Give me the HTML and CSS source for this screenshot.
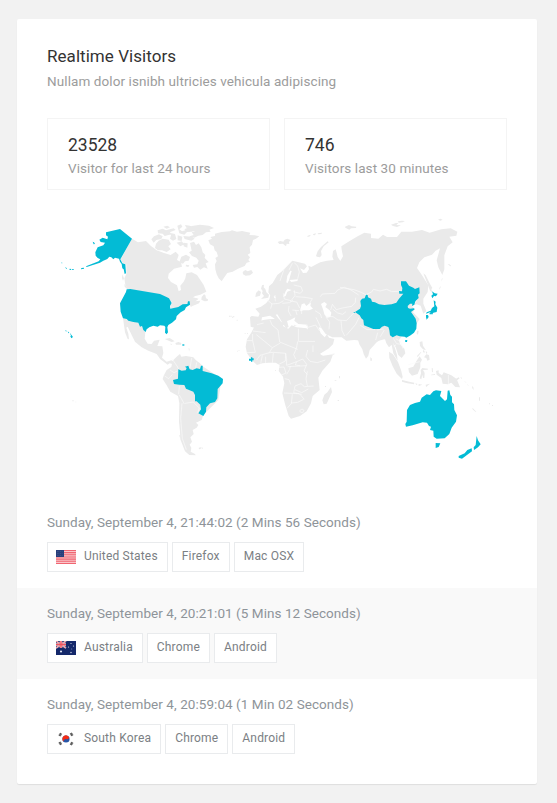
FILE: index.html
```html
<!DOCTYPE html>
<html lang="en">
<head>
<meta charset="utf-8">
<title>Realtime Visitors</title>
<link rel="stylesheet" href="styles.css">
</head>
<body>
<main class="card">
  <header class="card-header">
    <h1>Realtime Visitors</h1>
    <p>Nullam dolor isnibh ultricies vehicula adipiscing</p>
  </header>
  <section class="stats">
    <div class="stat"><strong>23528</strong><span>Visitor for last 24 hours</span></div>
    <div class="stat"><strong>746</strong><span>Visitors last 30 minutes</span></div>
  </section>
  <svg class="map" viewBox="-9 0 1380 780" aria-label="World map">
    <!-- North America -->
    <g class="land">
      <path d="M246 86l18 11 24-4 14 14 18 14 22 8 20 6 15-10 9 10-5 15 12 7 3 13-24 6-16 15-2 13 9 12 18 10 5 18 7-4-2-13 10-12 5-10 3-15 16-3 16 8 10 15 10 15 8 20-18 9-15 4-7 4 17 4-15 10-5 14-7-5 0-11-13 11-20 7-23 4-2-11 6-7-11-12-20-9-30-7-70-12-10-13-3-20 6-13 0-29-11-3-6-12z"/>
      <path d="M219 325l46 13 11 12 10 16-2 20 9 15 12 1 7-10 17-3-7 19 15 1 3 20-4 14 14 12 14-4 12 8-7 4-10-3-6 4-22-16-11-16-25-10-20-10-20-17-10-20-12-25-4 3 6 18 2 17-4-1-8-20z"/>
      <path d="M217 193l5 12-3 7-3-8zM223 222l14 14-5 2-8-8z"/>
      <path d="M304 88l8-9 15-6 11 6-4 8-15 3-8 8zM318 101l8-9 12-6 18 3 7 13-8 7 7 9-12 8-14-5-12 0-9-7zM323 61l15-5 10 5 23-6 6 5-18 7 8 5-23 6-6-7-14-1zM340 50l12-3 8 5-10 4zM365 70l10 2 4 15-10 5-9-6zM383 76l14 4-2 13-12-2zM382 47l11-4 4 7-9 8 8 6 15-5 3-8 20 2 6 7-15 5-14 1-8 8-15-4zM405 45l15 2 5 5-16 1zM425 48l25-4 27 3 15 7-14 5 4 6-14 2-10 8-13 2-12 6-15-4 13-4-6-8 10-3-16-4-7 5-9-7zM400 78l25 2 9 6-10 6-20-5zM380 98l15-4 8 9-12 6zM420 99l12-4 6 10 8-5 8 12 4 15 8 8-2 9 12 12-9 4 6 16-11-4-11 7-9-8-10 2-4-8 14-2 4-11-7-9-13-5-9-11 8-5zM401 98l12 2-1 13-11-4zM394 140l14-6 12 7-4 11-11 2-6 7-11-4zM408 164l10 2-3 5-8-2z"/>
      <path d="M423 266l12-2 9 4-8 6 15-2-4 8-12 5-14 5zM455 261l7-8 4 2 2 10 6 3-1 5-9 1-10-5z"/>
      <path d="M475 91l11-5-5-5 14-3 0-7 20-5 25-2 6-3 15 4 15-2 25 5-3 7 16 1 14 3-10 7-9 4-3 14-7 8 2 17-8 5 7 8-5 8 5 5-10 3-6 10-20 8-16 9-16 4-8 11-9 14-9-9-6-12-4-15-1-15 5-10-4-9 8-5-4-13-6-5-3-12-11-6z"/>
      <path d="M578 186l8-6 7 4 11-4 5 8-9 8-13 1-8-4zM344 387l15-3 15 10-9 2zM376 399l9-3 9 3-1 5-15 0zM360 401l6 1-2 3zM368 370l3 2M372 377l3 3M416 413l3 4-2 8M418 433l2 6"/>
    </g>
    <g class="visited">
      <path d="M168 67L210 57L246 86L211 148L217 160L226 163L228 190L224 192L221 178L217 175L215 162L210 155L207 146L195 143L190 148L184 142L178 140L172 147L160 152L150 158L110 171L108 169L146 154L151 148L143 144L137 137L136 127L143 112L160 106L165 98L152 96L148 89L158 83L172 88L174 80L168 76zM128 95l4 2 3 5-4 1z"/>
      <path d="M94 174l8-1 0 3-9 2zM45 171l6 4-2 2zM59 176l5 1-1 3-5-1zM66 177l5 0 0 3-5-1zM34 157l3 1-1 3zM46 359l4 4-2 2zM53 364l5 4-3 2zM60 370l4 3-2 2zM64 374l5 7-5 4-3-6z"/>
      <path d="M230 238L241 237L330 252L348 260L357 265L365 279L360 288L361 296L385 291L398 283L412 282L414 274L419 274L420 284L408 292L404 300L392 307L380 318L378 328L366 338L355 345L352 352L354 367L350 373L345 368L346 351L343 347L330 346L323 350L310 347L298 352L290 358L287 366L280 360L276 348L270 350L265 338L250 336L235 332L230 327L219 325L212 305L210 280L228 246z"/>
      <path d="M397 403h6v4h-6z"/>
    </g>
    <!-- South America -->
    <g transform="translate(300 390)">
      <path class="land" d="M80 50L90 42L94 50L108 48L130 52L137 60L150 70L158 79L185 97L215 115L205 180L160 225L155 240L138 248L145 255L140 263L128 270L131 282L121 292L126 305L119 314L124 323L122 335L135 342L137 346L118 345L105 334L98 316L91 298L90 275L87 245L88 190L84 168L61 155L50 136L38 117L41 107L50 90L64 81L68 62z"/>
      <path class="visited" d="M85 88L95 92L107 91L110 84L105 80L115 77L119 88L128 90L140 85L150 87L153 77L158 77L158 93L185 100L205 107L219 117L218 130L203 147L202 175L195 186L180 190L169 202L168 215L160 228L145 220L153 208L151 194L140 184L135 184L135 165L130 155L108 146L103 135L88 134L72 132L69 120L84 116z"/>
      <path class="border" d="M65 55l16 23 5 9M60 90l12 8 10-5M44 108l12 8 11-12M88 138l-2 25M88 165l15 27M96 190l-4 45 5 60 12 34M105 190l25-4 18 18-5 15M125 54l-5 30M140 67l-3 17"/>
      <path class="land" d="M146 323l7-1-1 5-5 1zM154 322l6 2-4 3zM88 285l3 1 1 8-3-2z"/>
    </g>
    <!-- Eurasia -->
    <g transform="translate(555 0)">
      <path class="land" d="M172 152l13 3 25 6 6 8-9 11-12-5 9 14 11-1 7-10-2-11 9 4 15-8 12-6 20-5 20-2-4-10 2-17 8-5 3 10 3 13 8 12 8-14-4-20-1-10 25-16 24-14 20-11 20 3 0 13 22 2 14-12 12 7 30 0 13-16 32 0 30-5 23 8 35-10 28-3 20 10-3 12-21 3 10 17-15 12-10 27 0 42-6 17-12-23-5-21 10-36-13 7-11 12-23 8-15 15-7 17 14 20 20 32-2 20-13 20 0 15 9 22-9 8-8-24-12-4-15 4 9 10-5 10 20 20-28 42-18 9-60 10-30 8-60-6-24 2-14-10-28 0-20-10-13-18-8-2 6 18 12 12 7-9 6 10 16 4-4 16-12 12-29 18-10 2-8-12-17-30-8-23 8-14 0-12-28-2-12-10 3-10-14 7-11 4 5 18-8 4-14-22-12-20-5 1 15 20 11 9-11 12-5-12-15-18-12-8-24 5-2 12-8 13-10 7-14-4-2-28 5-4 20 2 4-9-13-15 17-6 15-10 10-12 3-13 8-3 4 12 16 0 18-6 5-13 13-5-13-4-5 8-5 12-10 14-10 4-7-15-13 0-7-12 2-18 11-10 14-24 14-11z"/>
      <path class="land" d="M320 350L345 358L369 390L373 403L382 418L386 432L393 446L400 437L404 420L425 397L440 386L450 388L454 400L462 412L470 404L475 430L488 452L486 435L480 415L474 398L482 412L490 435L500 444L511 430L508 416L495 402L492 390L500 380L470 360L440 345L400 335L360 320z"/>
      <path class="sea" d="M196 298l4-15 8-3 6 8 8-7 6-3-2 9 8 9-12 5-16 0-10 3zM258 282l10-6 8 6-5 9 12 9 6 8-3 13-10 2-8-10-4-15zM166 182l4 1-5 17-3 11-5 9-3-3 3-20zM163 210l26-2-2 5-18 3z"/>
      <path class="land" d="M81 226l6-2-1 8 5 5 3 10 8 7-2 9-22 4 9-9-6-8 2-7-5-7zM63 249l8-8 7 5-3 11-14 4zM122 239l5 0-1 5zM109 306l3-2 1 10-4-1zM137 324l10 2-2 3-8-2zM176 344l10 2-9 1zM213 346l7-3-3 4zM406 441l5 5-1 7-4-1z"/>
      <path class="land" d="M128 96l8-3 9 2 4-6 8-3 10 4-5 6 1 6-8-1-2 8-9-8-11 1zM218 77l9-3-2 5-8 2zM235 72l8-2-3 6-6-1zM248 70l13-2-2 4-10 1zM243 138l5-14 10-13 20-17 3 3-15 12-8 14 2 12-5 7-9-2zM330 50l12-5 8 4 14 1-1 4-15 1-5 4-12-6zM468 44l15-5 7 0-6 6 14 1-12 5-12-3zM489 34l12-2 9 1-7 4-12 1zM609 29l7-3 7 3-7 3zM638 162l5 1 6 5-3 1z"/>
      <path class="land" d="M565 190l7 6 12 24 8 14-3 3 3 11-7-6-7-19zM546 362l5 0-2 12-4-3zM613 235l3-6 1 1-3 9zM620 207l3-4-3 12z"/>
      <path class="border" d="M172 160l-10 20M135 213l5-15 7-20 15-18M178 158l10 10 5 18-5 20M176 225l22 5 5 13-8 7-20-5M145 250l3 17 20 5 12-15-2-16M120 255l1 19M95 268l16 14-4 14M109 282l23-2 14-8M142 280l22-2 10-8M165 273l20 3 9 18M172 300l20 2M182 260l28 2 22 4-9 15M256 260l6-8 38-2 8-10 20-8 20 8 23 15M362 263l-1 14-11 12-28 5-18 5-12-16-5 17M276 320l18 0 15 10 25 2 14-15 10-9M315 232l42 7 22 8 15 8M392 254l18-8 5-8 20 5 20-5 15 7 33-2 10 8M240 302l16 10 4 12M243 322l15 32M219 352l23-7 12 18M272 320l12 16-2 22M318 332l3 30 8 16M334 376l28-33 10-20M376 346l20 13 24 0M426 360l20-3M448 360l-12 20M428 368l-6 22M162 288l-2 15 8 15M182 300l4 15M293 297l15 12 15 4 10-8M200 297l0 15M535 285l8-10 5-12M475 385l10 16 12 2M482 386l14 8 8 22M475 408l8-3"/>
    </g>
    <!-- Africa -->
    <g transform="translate(555 300)">
      <path class="land" d="M65 36L85 30L100 28L128 26L134 29L132 42L148 50L160 56L170 46L185 52L215 55L224 72L234 95L243 118L258 134L264 137L294 133L286 155L262 182L250 203L254 240L233 258L228 280L215 304L195 318L168 326L161 318L150 282L142 250L148 220L144 200L131 183L134 165L122 158L100 158L82 160L66 165L52 152L36 130L32 110L36 88L50 66z"/>
      <path class="border" d="M66 44l20-5M54 63l38 5M35 92l18 0 0-20M64 74l48 39 24-14M105 30l6 15 18 15 5 36 54 22M190 56l0 38M188 94l-4 22-8 18 6 13M190 94l50 0M112 113l-9 15-28 8-10 14M53 92l8 35-28 1M103 128l12-1 37 3-1 23-18 9M92 140l0 20M82 136l-5 25M115 128l-3 31M152 130l3 18 0 18 30-11M185 155l-4 10 14 2M185 155l18-8 12 16-8 20 10 10M132 172l15-1 6 18-15 7M158 170l57-3M155 193l9-15 2-10M149 206l13 3 5 14M217 184l-4 22 4 22M180 228l18-7 10 9 28-2M180 228l-4 20 24 5M147 249l46 2M172 253l-3 28-13 14M194 252l14 16M169 279l19-2 18-9M218 120l-5 19 12 15 22 4 24-8M234 106l0 20M180 239l20 9 20-11"/>
      <path class="border" d="M194 302l7-5 6 4-4 7-6-1z"/>
      <path class="land" d="M288 231l3 15-16 35-9 2-4-12 6-17 9-7zM270 228h3v3h-3zM308 270h4v3h-4zM299 211h5v2h-5zM312 198h3v7h-3zM120 180h3v2h-3zM29 70h3v2h-3zM36 69h3v2h-3zM6 122h2v3h-2zM11 120h2v3h-2zM5 29h3v3h-3zM-9 20h3v3h-3zM-18 17h3v3h-3zM292 131l8 0-4 3z"/>
      <path class="visited" d="M48 142h4v3h4v6h-4v4h-4v-3h-6v-6h6zM355 6h5v2h-3z"/>
    </g>
    <!-- East Asia -->
    <g class="visited" transform="translate(840 180)">
      <path d="M75 126L90 116L93 108L91 93L96 86L104 85L108 74L113 75L114 82L123 86L126 95L135 97L147 103L163 105L185 103L199 98L207 86L220 71L208 71L207 63L216 64L217 54L213 45L213 34L228 34L237 47L250 53L255 57L268 52L269 70L264 74L266 84L256 94L253 104L246 108L247 101L240 101L233 108L234 114L240 116L252 115L254 118L243 126L249 134L257 146L260 160L259 176L252 188L242 196L229 203L224 200L209 199L200 196L188 202L180 196L178 180L175 171L164 167L156 170L149 177L130 177L102 166L100 150L94 145L89 136z"/>
      <path d="M225 211L232 210L231 216L226 216zM306 64L314 70L323 71L318 79L312 78L307 85L304 77L309 73zM311 91L317 95L316 103L322 113L320 126L310 128L306 134L300 127L288 131L290 127L302 122L306 114L313 109zM288 135L294 135L296 141L290 149L288 142zM298 129L305 129L300 134z"/>
    </g>
    <!-- Oceania -->
    <g transform="translate(990 360)">
      <path class="land" d="M27 65l12 8 15 23 9 24 5 20-2 7-16-16-12-22-10-25zM85 115l15-5 10-18 9-13 7 10-5 9 0 14-8 20-17 5-9-10zM66 150l22 5 15 3-1 5-20-3-16-5zM106 160l7 2-4 3zM116 162l11 2-11 4zM137 164l13-3-12 10zM122 120l5-6 17 2-1 3-14 1 5 9-1 15-4 0-2-10-3 14-5-3 4-15zM119 36l8-2 2 13 6 9 3 5-9-3-9-10zM111 78l12-13 1 2-11 14zM129 60l5 3-1 7-4-5zM137 64l5 2-3 7zM132 82l7-9 8 2 2 14-7 3-3-8zM155 115l3-1 1 12-3 1zM153 134l12-2 0 3-11 1zM168 123l8-2 0 8 10 7 5-9 23 9 16 11 10 25-14-1-12-13-10 5-16-2-4-17-14-10zM221 150l15-8 3 3-10 8zM241 140l5 4-2 3zM252 152l8 6-4-1zM261 162l6 5-4-1zM276 168l4 4 1 8-4-5zM297 202h3v10h-3zM278 234l11 11-3 0-9-8zM327 220h3v3h-3zM336 225h3v3h-3z"/>
      <path class="border" d="M205 135v31M85 104l22-6 12-3"/>
      <path class="visited" d="M81 240L90 225L105 219L120 215L125 203L140 193L150 195L160 184L168 181L184 183L180 198L195 213L201 208L203 182L208 181L211 195L216 200L216 217L222 223L223 240L231 256L228 275L215 293L208 312L194 325L170 326L161 320L160 302L150 300L153 290L147 288L141 278L128 277L98 286L78 290L76 282L80 275zM167 339L181 340L176 351L167 354zM290 318L294 331L302 343L294 352L282 360L281 352L287 345zM275 355L276 364L262 374L246 386L236 383L236 378L254 370L262 360z"/>
    </g>
    <path class="land" d="M67 571h4v3h-4zM76 575h3v2h-3zM541 317h4v3h-4zM549 319h4v3h-4z"/>
  </svg>
  <ul class="visits">
    <li>
      <p>Sunday, September 4, 21:44:02 (2 Mins 56 Seconds)</p>
      <div class="chips">
        <span class="chip chip-country">
          <svg class="flag" viewBox="0 0 20 14"><path fill="#fac5c9" d="M0 0h20v14H0z"/><path stroke="#f06672" stroke-width="1.1" d="M0 .5h20M0 2.65h20M0 4.8h20M0 7h20M0 9.15h20M0 11.3h20M0 13.5h20"/><path fill="#293f7b" d="M0 0h8v7H0z"/><path stroke="#6675a5" stroke-width=".5" stroke-dasharray=".6 1" d="M1 1.5h6M1 3.5h6M1 5.5h6"/></svg>
          United States
        </span>
        <span class="chip">Firefox</span>
        <span class="chip">Mac OSX</span>
      </div>
    </li>
    <li>
      <p>Sunday, September 4, 20:21:01 (5 Mins 12 Seconds)</p>
      <div class="chips">
        <span class="chip chip-country">
          <svg class="flag" viewBox="0 0 20 14"><path fill="#14286a" d="M0 0h20v14H0z"/><path stroke="#f4d9df" stroke-width="1.6" d="M0 0l10 7M10 0L0 7"/><path stroke="#f4d9df" stroke-width="2.5" d="M5 0v7M0 3.5h10"/><path stroke="#ef5560" stroke-width="1.4" d="M5 0v7M0 3.5h10"/><path stroke="#ef5560" stroke-width=".6" d="M0 0l10 7M10 0L0 7"/><g fill="#dce1ef"><circle cx="5" cy="10.5" r="1.1"/><circle cx="15" cy="2.5" r=".6"/><circle cx="12.5" cy="6" r=".6"/><circle cx="17.5" cy="5" r=".6"/><circle cx="15.8" cy="8" r=".4"/><circle cx="15" cy="11.5" r=".7"/></g></svg>
          Australia
        </span>
        <span class="chip">Chrome</span>
        <span class="chip">Android</span>
      </div>
    </li>
    <li>
      <p>Sunday, September 4, 20:59:04 (1 Min 02 Seconds)</p>
      <div class="chips">
        <span class="chip chip-country">
          <svg class="flag" viewBox="0 0 20 14"><path fill="#fff" d="M0 0h20v14H0z"/><circle cx="10" cy="7" r="3.6" fill="#2856a7"/><path fill="#f52c14" d="M7.3 9.4a3.6 3.6 0 1 1 5.9-4c-.7 1.8-2 2-3.2 1.6-1.2-.4-2 .6-2.7 2.4z"/><path stroke="#494949" stroke-width="2.4" stroke-dasharray=".9 .2" d="M3.4 3.9l1.9-2.8M14.7 12.9l1.9-2.8M3.4 10.1l1.9 2.8M14.7 1.1l1.9 2.8"/></svg>
          South Korea
        </span>
        <span class="chip">Chrome</span>
        <span class="chip">Android</span>
      </div>
    </li>
  </ul>
</main>
</body>
</html>
```
FILE: styles.css
```css
* {
  box-sizing: border-box;
}

body {
  margin: 0;
  padding: 19px 20px 19px 17px;
  background: #f2f2f2;
  color: #333;
  font-family: Roboto, sans-serif;
}

h1,
p,
ul {
  margin: 0;
  padding: 0;
  font-weight: 400;
}

.card {
  height: 765px;
  background: #fff;
  border-radius: 2px;
  box-shadow: 0 1px 1px rgba(0, 0, 0, .08);
}

.card-header {
  height: 99px;
  padding: 26px 30px 0;
}

h1 {
  font-size: 17px;
  line-height: 23px;
  letter-spacing: .05px;
}

.card-header p,
.stat span {
  color: #9c9c9c;
  font-size: 13.5px;
  letter-spacing: .09px;
}

.card-header p {
  line-height: 20px;
  margin-top: 3px;
}

.stats {
  display: grid;
  grid-template-columns: 1fr 1fr;
  gap: 14px;
  padding: 0 30px;
}

.stat {
  display: flex;
  flex-direction: column;
  height: 72px;
  padding: 14px 20px;
  border: 1px solid #f4f4f4;
}

.stat strong {
  font-size: 17.5px;
  font-weight: 400;
  line-height: 24px;
}

.stat span {
  line-height: 23px;
}

.map {
  display: block;
  width: 460px;
  height: 260px;
  margin: 20px 30px 27px;
}

.land {
  fill: #eaeaea;
}

.visited {
  fill: #03bbd5;
}

.sea {
  fill: #fff;
}

.border {
  fill: none;
  stroke: #fafafa;
  stroke-width: 2;
}

.visits {
  list-style: none;
}

.visits li {
  height: 91px;
  padding: 15px 30px;
}

.visits li:nth-child(even) {
  background: #f9f9f9;
}

.visits p {
  color: #8e9499;
  font-size: 13.5px;
  line-height: 21px;
  letter-spacing: .06px;
}

.chips {
  display: flex;
  gap: 4px;
  margin-top: 9px;
}

.chip {
  display: flex;
  align-items: center;
  height: 30px;
  padding: 0 9px 2px;
  border: 1px solid #e9ebed;
  background: #fff;
  color: #7b8084;
  font-size: 12px;
  letter-spacing: .18px;
  white-space: nowrap;
}

.chip-country {
  gap: 8px;
  padding-left: 8px;
}

.flag {
  width: 20px;
  height: 14px;
  position: relative;
  top: 1px;
}
```
